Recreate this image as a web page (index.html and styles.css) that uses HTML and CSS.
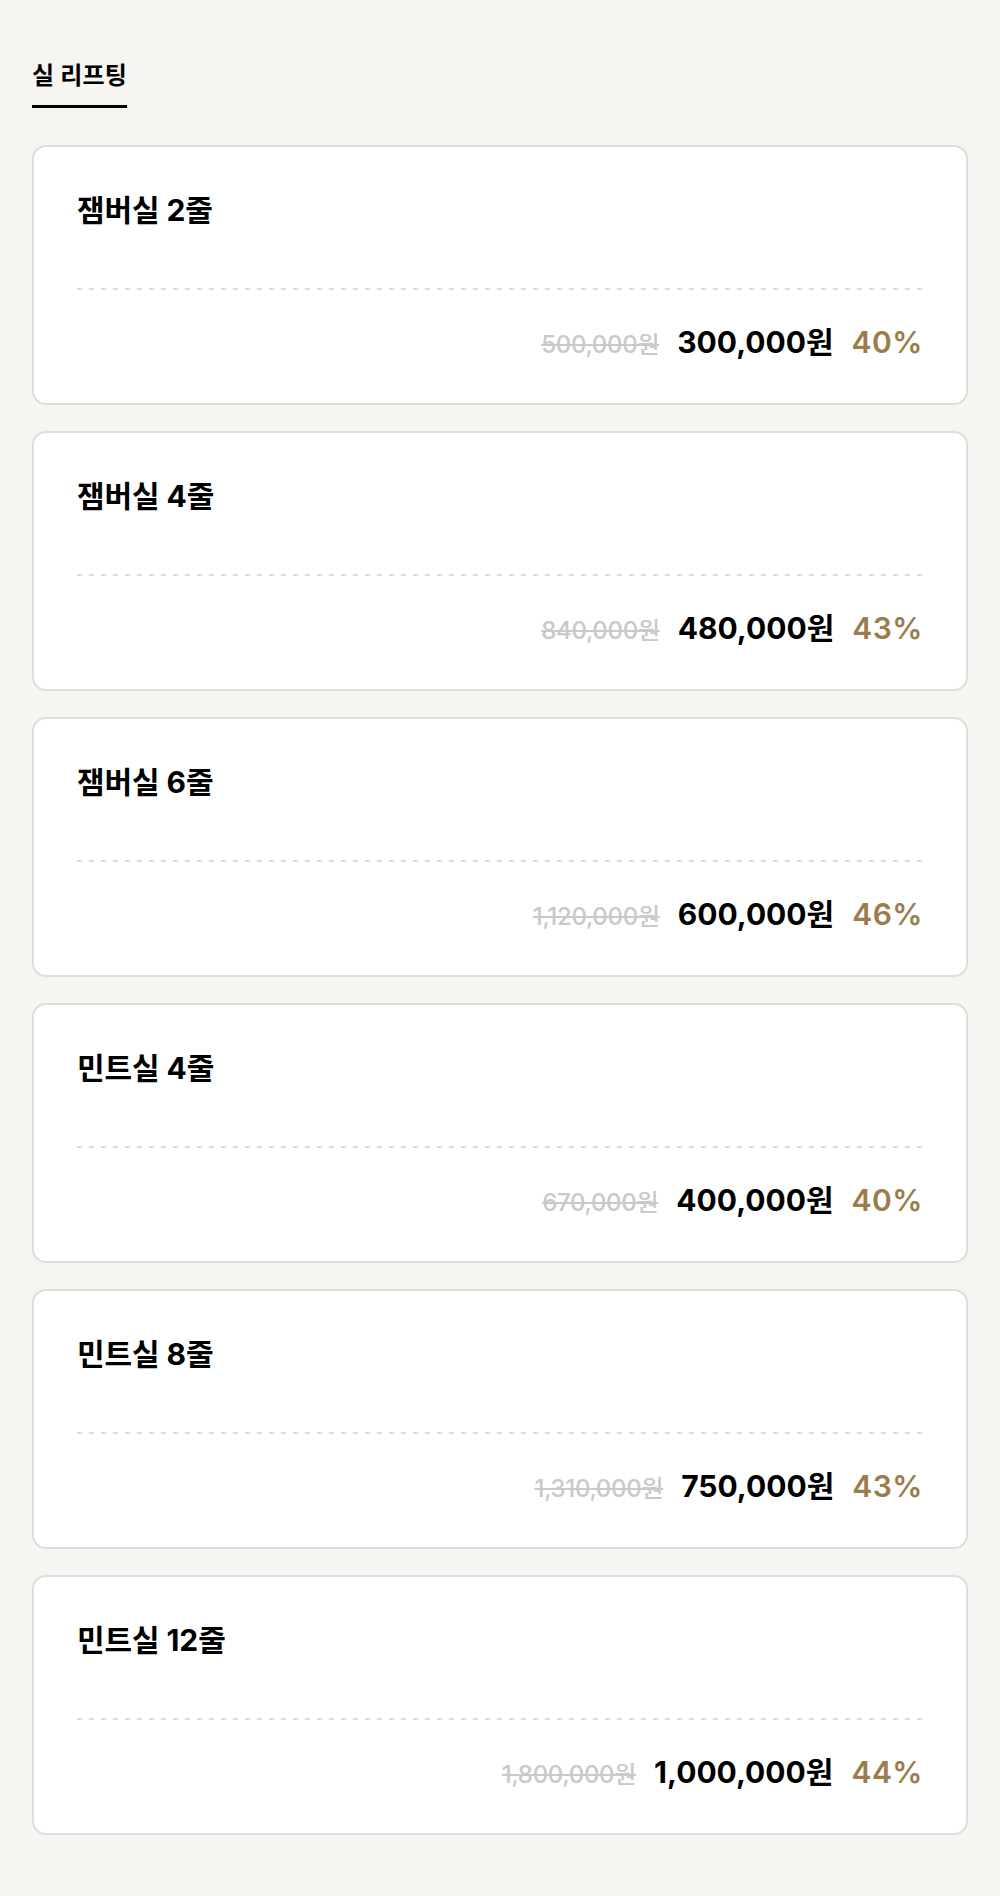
FILE: index.html
```html
<!DOCTYPE html>
<html lang="ko">
<head>
<meta charset="utf-8">
<title>실 리프팅</title>
<link rel="stylesheet" href="styles.css">
</head>
<body>
<main class="page">
  <nav class="tabs">
    <span class="tab active">실 리프팅</span>
  </nav>
  <section class="list">
    <article class="card">
      <h2 class="card-title">잼버실 2줄</h2>
      <div class="price-row">
        <span class="orig">500,000원</span>
        <span class="price">300,000원</span>
        <span class="pct">40%</span>
      </div>
    </article>
    <article class="card">
      <h2 class="card-title">잼버실 4줄</h2>
      <div class="price-row">
        <span class="orig">840,000원</span>
        <span class="price">480,000원</span>
        <span class="pct">43%</span>
      </div>
    </article>
    <article class="card">
      <h2 class="card-title">잼버실 6줄</h2>
      <div class="price-row">
        <span class="orig">1,120,000원</span>
        <span class="price">600,000원</span>
        <span class="pct">46%</span>
      </div>
    </article>
    <article class="card">
      <h2 class="card-title">민트실 4줄</h2>
      <div class="price-row">
        <span class="orig">670,000원</span>
        <span class="price">400,000원</span>
        <span class="pct">40%</span>
      </div>
    </article>
    <article class="card">
      <h2 class="card-title">민트실 8줄</h2>
      <div class="price-row">
        <span class="orig">1,310,000원</span>
        <span class="price">750,000원</span>
        <span class="pct">43%</span>
      </div>
    </article>
    <article class="card">
      <h2 class="card-title">민트실 12줄</h2>
      <div class="price-row">
        <span class="orig">1,800,000원</span>
        <span class="price">1,000,000원</span>
        <span class="pct">44%</span>
      </div>
    </article>
  </section>
</main>
</body>
</html>
```

FILE: styles.css
```css
* { box-sizing: border-box; }

html, body {
  margin: 0;
  padding: 0;
  background: #f6f5f1;
}

body {
  font-family: Inter, "Noto Sans CJK KR", "Noto Sans", sans-serif;
  color: #000;
}

.page {
  padding: 60px 32px 60px 32px;
}

.tabs {
  display: flex;
}

.tab {
  font-size: 24px;
  font-weight: 700;
  line-height: 31px;
  padding-bottom: 14px;
  border-bottom: 3px solid #000;
  letter-spacing: 0.2px;
}

.list {
  margin-top: 37px;
  display: flex;
  flex-direction: column;
  gap: 26px;
}

.card {
  background: #fff;
  border: 2px solid #dedddb;
  border-radius: 14px;
  padding: 43px 43px 43px 43px;
  height: 260px;
}

.card-title {
  margin: 0;
  font-size: 30px;
  font-weight: 700;
  line-height: 40px;
  letter-spacing: -0.1px;
}

.price-row {
  margin-top: 58px;
  background-image: linear-gradient(to right, #dcdcdc 0 5px, transparent 5px 12px);
  background-size: 12px 2px;
  background-repeat: repeat-x;
  background-position: left top;
  padding-top: 36px;
  box-sizing: content-box;
  height: 36px;
  display: flex;
  justify-content: flex-end;
  align-items: baseline;
  gap: 18px;
}

.orig {
  font-size: 24px;
  font-weight: 500;
  color: #c9c9c9;
  text-decoration: line-through;
  text-decoration-thickness: 2px;
  letter-spacing: -0.3px;
}

.price {
  font-size: 30px;
  font-weight: 700;
  line-height: 36px;
}

.pct {
  font-size: 30px;
  font-weight: 600;
  color: #9b7c4c;
  line-height: 36px;
  letter-spacing: 0.5px;
}
```
